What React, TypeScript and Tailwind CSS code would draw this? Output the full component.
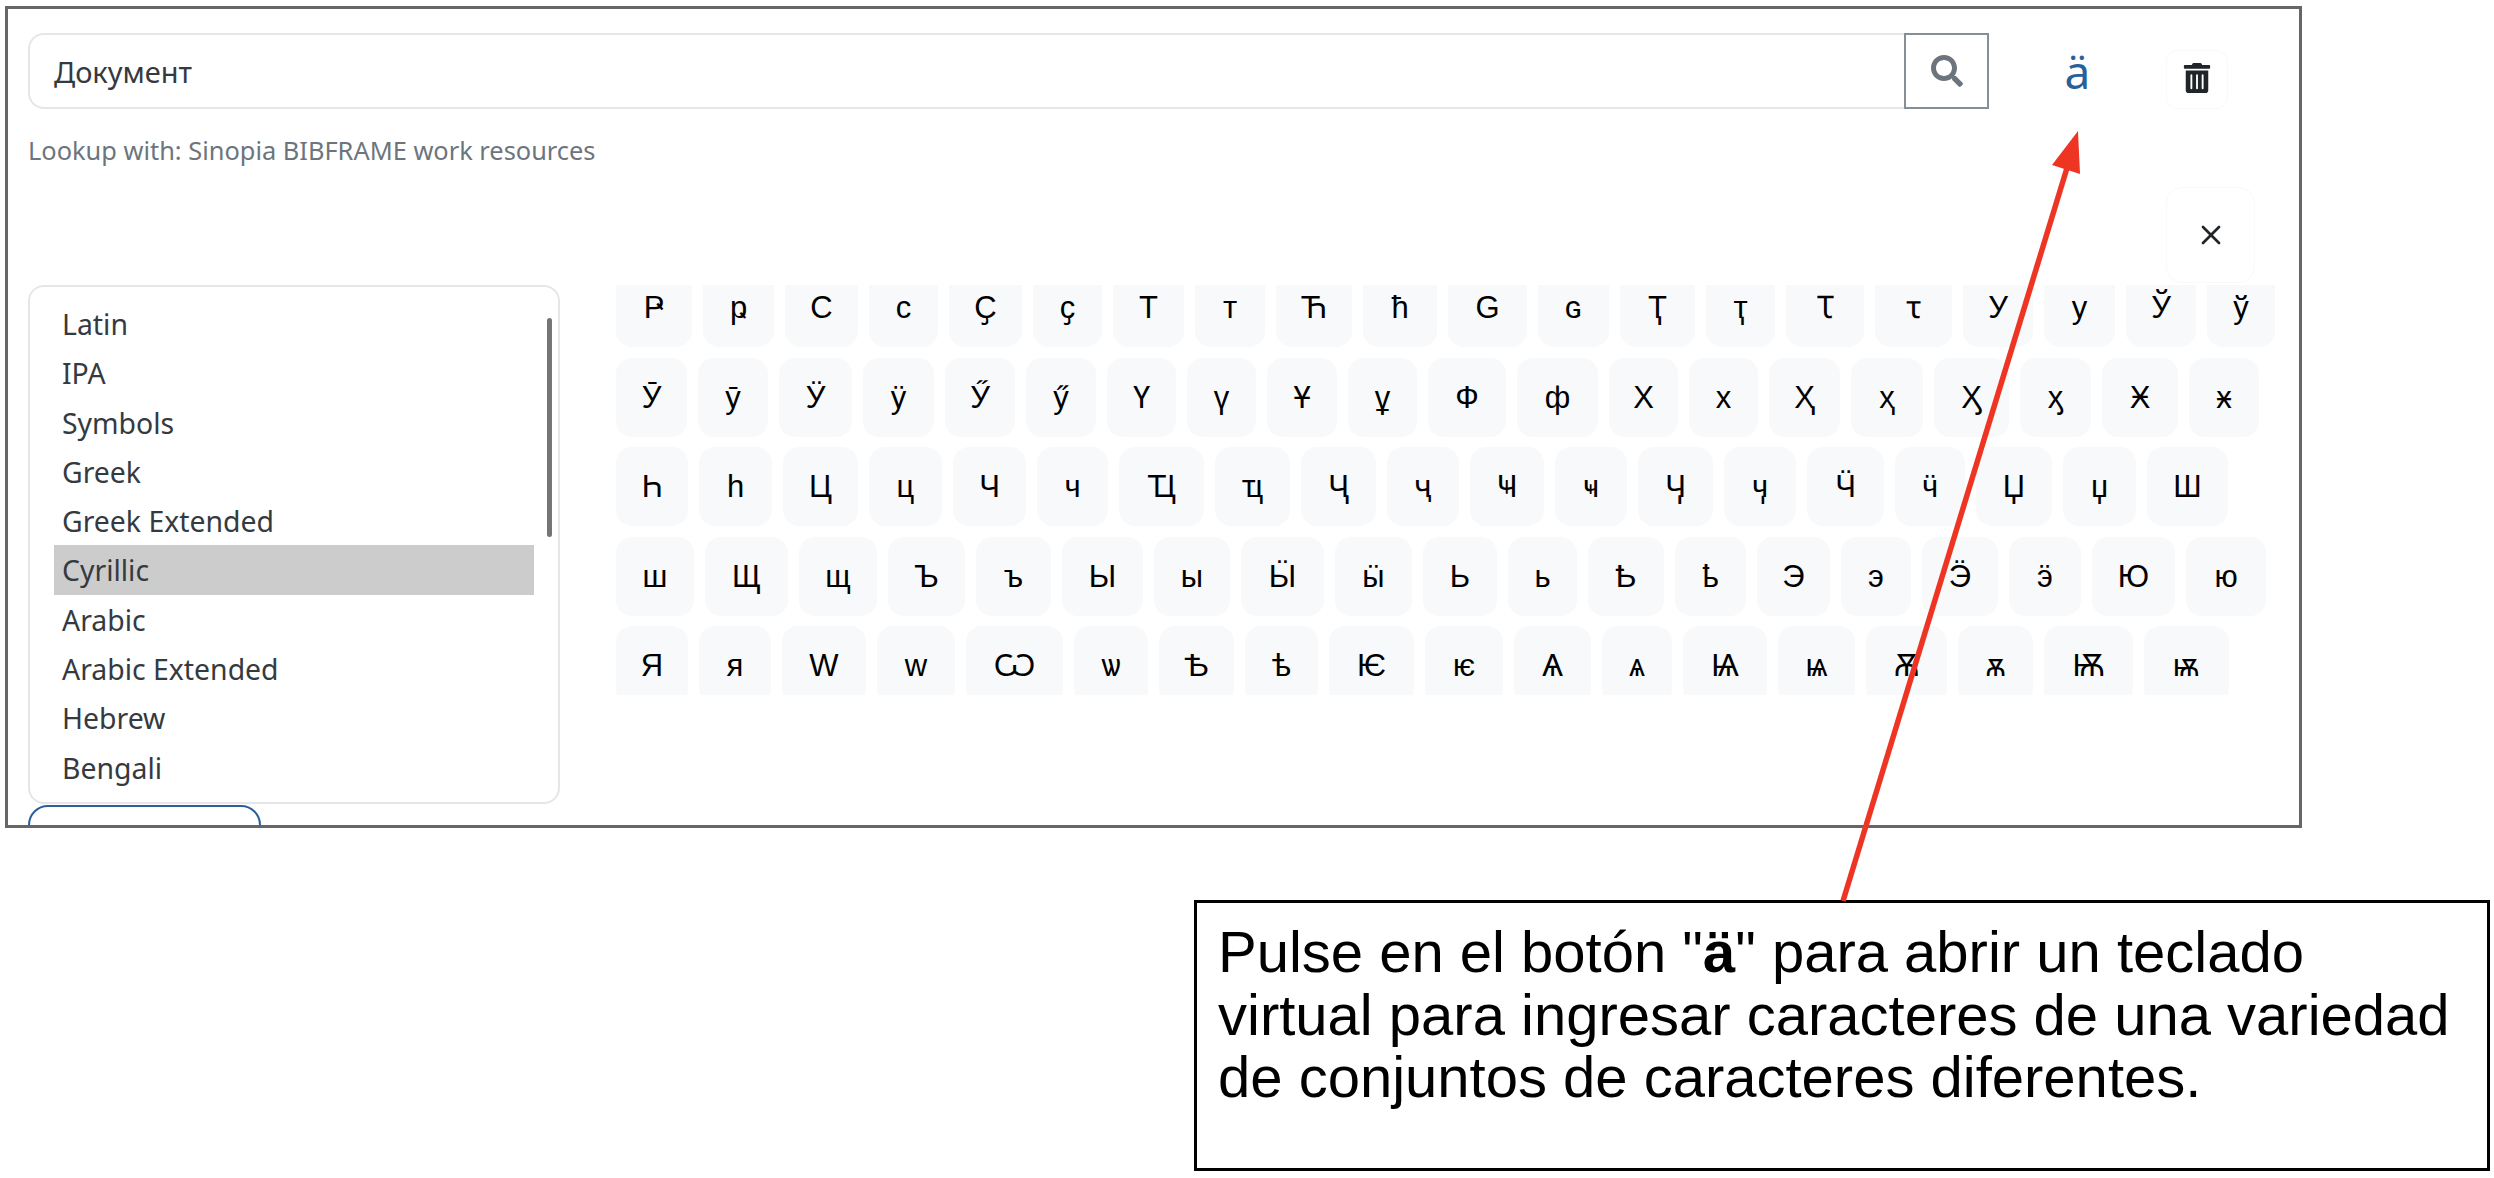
import React from 'react';
import { FaSearch, FaTrashAlt } from 'react-icons/fa';
import { X } from 'lucide-react';

const scripts = ['Latin', 'IPA', 'Symbols', 'Greek', 'Greek Extended', 'Cyrillic', 'Arabic', 'Arabic Extended', 'Hebrew', 'Bengali'];

// each row: the characters, the x where each key starts, and the x where the last key ends
const rows: { chars: string[]; starts: number[]; end: number }[] = [
  {
    chars: ['Ҏ', 'ҏ', 'С', 'с', 'Ҫ', 'ҫ', 'Т', 'т', 'Ћ', 'ћ', 'Ԍ', 'ԍ', 'Ҭ', 'ҭ', 'Ꚍ', 'ꚍ', 'У', 'у', 'Ў', 'ў'],
    starts: [616, 703, 785, 869, 949, 1033, 1113, 1195, 1276, 1363, 1448, 1538, 1620, 1706, 1786, 1875, 1963, 2044, 2126, 2207],
    end: 2275,
  },
  {
    chars: ['Ӯ', 'ӯ', 'Ӱ', 'ӱ', 'Ӳ', 'ӳ', 'Ү', 'ү', 'Ұ', 'ұ', 'Ф', 'ф', 'Х', 'х', 'Ҳ', 'ҳ', 'Ӽ', 'ӽ', 'Ӿ', 'ӿ'],
    starts: [616, 698, 779, 863, 945, 1026, 1107, 1187, 1267, 1348, 1428, 1517, 1609, 1689, 1769, 1851, 1934, 2020, 2102, 2189],
    end: 2259,
  },
  {
    chars: ['Һ', 'һ', 'Ц', 'ц', 'Ч', 'ч', 'Ҵ', 'ҵ', 'Ҷ', 'ҷ', 'Ҹ', 'ҹ', 'Ӌ', 'ӌ', 'Ӵ', 'ӵ', 'Џ', 'џ', 'Ш'],
    starts: [616, 699, 783, 869, 953, 1037, 1119, 1215, 1301, 1387, 1470, 1555, 1638, 1724, 1807, 1895, 1976, 2063, 2147],
    end: 2228,
  },
  {
    chars: ['ш', 'Щ', 'щ', 'Ъ', 'ъ', 'Ы', 'ы', 'Ӹ', 'ӹ', 'Ь', 'ь', 'Ҍ', 'ҍ', 'Э', 'э', 'Ӭ', 'ӭ', 'Ю', 'ю'],
    starts: [616, 705, 799, 888, 976, 1062, 1154, 1241, 1335, 1423, 1508, 1588, 1675, 1757, 1841, 1922, 2009, 2092, 2186],
    end: 2266,
  },
  {
    chars: ['Я', 'я', 'Ԝ', 'ԝ', 'Ѡ', 'ѡ', 'Ѣ', 'ѣ', 'Ѥ', 'ѥ', 'Ѧ', 'ѧ', 'Ѩ', 'ѩ', 'Ѫ', 'ѫ', 'Ѭ', 'ѭ'],
    starts: [616, 699, 782, 877, 966, 1074, 1159, 1245, 1329, 1425, 1514, 1602, 1683, 1778, 1866, 1958, 2044, 2144],
    end: 2229,
  },
];

const KEY_GAP = 11;

const App: React.FC = () => {
  return (
    <div className="relative w-[2494px] h-[1178px] overflow-hidden bg-white font-['Noto_Sans',sans-serif]">
      {/* Screenshot frame */}
      <div className="ml-[5px] mt-[6px] h-[822px] w-[2297px] overflow-hidden border-[3px] border-[#666666] bg-white">
        {/* Lookup input */}
        <div className="flex pl-[20px] pr-[71px] pt-[24px]">
          <div className="flex h-[76px] w-[1876px] items-center rounded-l-[16px] border-2 border-r-0 border-[#e4e7ea] pl-[24px] pt-[2px] text-[29px] text-[#343a40]">
            Документ
          </div>
          <button className="flex h-[76px] w-[85px] items-center justify-center border-2 border-[#868e96] text-[#6c757d]">
            <FaSearch size={32} />
          </button>
          <div className="flex h-[76px] flex-1 items-center justify-center text-[46px] text-[#2a6099]">ä</div>
          <button className="mt-[17px] flex h-[59px] w-[62px] items-center justify-center rounded-[12px] border border-[#f8f9fa] pb-[3px] text-[#212529]">
            <FaTrashAlt size={30} />
          </button>
        </div>

        <div className="ml-[20px] mt-[23px] text-[25.4px] leading-[36px] text-[#6c757d]">Lookup with: Sinopia BIBFRAME work resources</div>

        <div className="mt-[19px] flex justify-end pr-[44px]">
          <button className="flex h-[96px] w-[89px] items-center justify-center rounded-[16px] border border-[#f8f9fa] text-[#212529]">
            <X size={32} />
          </button>
        </div>

        {/* Virtual keyboard */}
        <div className="ml-[20px] mt-[2px] flex">
          <div>
            <div className="relative h-[519px] w-[532px] rounded-[16px] border-2 border-[#e4e7ea] pl-[24px] pt-[12px]">
              {scripts.map((name) => (
                <div
                  key={name}
                  className={`h-[49.3px] w-[480px] pl-[8px] text-[28.4px] leading-[51px] text-[#343a40] ${name === 'Cyrillic' ? 'bg-[#cccccc]' : ''}`}
                >
                  {name}
                </div>
              ))}
              <div className="absolute left-[517px] top-[31px] h-[219px] w-[5px] rounded-full bg-[#757575]" />
            </div>
            <div className="mt-px h-[60px] w-[233px] rounded-t-[20px] border-2 border-[#2a6099]" />
          </div>

          <div className="ml-[56px] h-[410px] flex-1 overflow-hidden">
            <div className="-mt-[17px] flex flex-col gap-[10.5px]">
              {rows.map((row, r) => (
                <div key={r} className="flex h-[79px]">
                  {row.chars.map((ch, i) => {
                    const next = i + 1 < row.starts.length ? row.starts[i + 1] - KEY_GAP : row.end;
                    return (
                      <div
                        key={ch}
                        style={{ width: next - row.starts[i], marginRight: i + 1 < row.starts.length ? KEY_GAP : 0 }}
                        className="flex h-full shrink-0 items-center justify-center rounded-[16px] bg-[#f8f9fa] pt-[2px] font-['Liberation_Sans',sans-serif] text-[31px] text-black"
                      >
                        {ch}
                      </div>
                    );
                  })}
                </div>
              ))}
            </div>
          </div>
        </div>
      </div>

      {/* Callout */}
      <div className="ml-[1194px] mt-[72px] h-[271px] w-[1296px] border-[3px] border-black bg-white pl-[21px] pt-[18px] font-['Liberation_Sans',Arial,sans-serif] text-[58px] leading-[62.5px] text-black">
        Pulse en el botón "<b>ä</b>" para abrir un teclado
        <br />
        virtual para ingresar caracteres de una variedad
        <br />
        de conjuntos de caracteres diferentes.
      </div>

      {/* Red arrow lying over the screenshot */}
      <svg className="absolute left-0 top-0" width="2494" height="1178" viewBox="0 0 2494 1178" fill="none">
        <line x1="1843" y1="901" x2="2067" y2="168" stroke="#ee3524" strokeWidth="5.5" />
        <polygon points="2078,131 2052,165 2080,174" fill="#ee3524" />
      </svg>
    </div>
  );
};

export default App;
